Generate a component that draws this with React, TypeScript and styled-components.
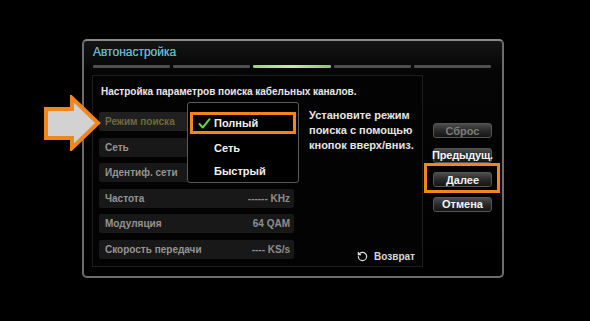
import styled, { createGlobalStyle } from "styled-components";
import { RotateCcw } from "lucide-react";

const GlobalStyle = createGlobalStyle`
  html, body {
    margin: 0;
    padding: 0;
    background: #000;
  }
  body {
    font-family: "Liberation Sans", Arial, sans-serif;
    color: #e6e6e6;
  }
`;

const Stage = styled.div`
  position: relative;
  width: 590px;
  height: 321px;
  padding: 39px 0 0 82px;
  box-sizing: border-box;
  background: #000;
  overflow: hidden;
`;

const Window = styled.div`
  width: 422px;
  height: 239px;
  box-sizing: border-box;
  border: 2px solid #6c6c6c;
  border-top-color: #8a8a8a;
  border-radius: 5px;
  background: linear-gradient(#141414 0px, #050505 30px, #000 100%);
  padding: 0 0 0 8px;
  display: flex;
  flex-direction: column;
`;

const Title = styled.div`
  padding: 3px 0 0 1px;
  height: 17px;
  line-height: 17px;
  font-size: 12px;
  color: #63b6c9;
  text-shadow: 0 0 0.5px #63b6c9;
`;

const Steps = styled.div`
  display: flex;
  gap: 3px;
  margin: 4px 0 0 1px;
  width: 398px;
`;

const Step = styled.div<{ $active?: boolean }>`
  flex: 1;
  height: 3px;
  border-radius: 1px;
  background: ${(p) =>
    p.$active
      ? "linear-gradient(90deg, #9fcf7a 0%, #c8e8a8 50%, #8fbf70 100%)"
      : "#4e4e4e"};
`;

const Body = styled.div`
  display: flex;
  margin-top: 7px;
`;

const Panel = styled.div`
  position: relative;
  width: 331px;
  height: 192px;
  box-sizing: border-box;
  border: 1px solid #1d1d1d;
  background: #030303;
  padding: 9px 6px 0 6px;
  display: flex;
  flex-direction: column;
`;

const Heading = styled.div`
  font-size: 10px;
  line-height: 14px;
  font-weight: bold;
  color: #e8e8e8;
  padding-left: 2px;
`;

const Content = styled.div`
  display: flex;
  gap: 15px;
  margin-top: 13px;
  flex: 1;
`;

const Rows = styled.div`
  display: flex;
  flex-direction: column;
  gap: 6.6px;
  width: 195px;
`;

const Row = styled.div<{ $current?: boolean }>`
  height: 19px;
  border-radius: 2px;
  background: ${(p) => (p.$current ? "#202020" : "#181818")};
  display: flex;
  align-items: center;
  justify-content: space-between;
  padding: 0 4px 0 6px;
  font-size: 10px;
  font-weight: bold;
  color: ${(p) => (p.$current ? "#6f6a3b" : "#949494")};
`;

const Value = styled.span`
  color: #8e8e8e;
`;

const Side = styled.div`
  flex: 1;
  display: flex;
  flex-direction: column;
  justify-content: space-between;
  padding-bottom: 4px;
`;

const Hint = styled.div`
  margin-top: -4px;
  font-size: 11px;
  line-height: 15px;
  font-weight: bold;
  color: #e6e6e6;
`;

const Back = styled.div`
  align-self: flex-end;
  display: flex;
  align-items: center;
  gap: 6px;
  padding-right: 1px;
  font-size: 10px;
  font-weight: bold;
  color: #d8d8d8;
  svg {
    color: #e0e0e0;
  }
`;

const Dropdown = styled.div`
  position: absolute;
  left: 94px;
  top: 26px;
  width: 112px;
  height: 81px;
  box-sizing: border-box;
  border: 1px solid #5a5a5a;
  border-radius: 3px;
  background: #000;
  padding: 9px 2px 0 2px;
  display: flex;
  flex-direction: column;
`;

const Option = styled.div<{ $selected?: boolean }>`
  height: ${(p) => (p.$selected ? "22px" : "23px")};
  box-sizing: border-box;
  margin-bottom: ${(p) => (p.$selected ? "2px" : "0")};
  border: ${(p) => (p.$selected ? "3px solid #f0861c" : "3px solid transparent")};
  display: flex;
  align-items: center;
  padding-left: 4px;
  gap: 3px;
  font-size: 11px;
  font-weight: bold;
  color: #f2f2f2;
`;

const Check = styled.span`
  width: 14px;
  display: inline-flex;
  justify-content: center;
`;

const Buttons = styled.div`
  display: flex;
  flex-direction: column;
  gap: 9.5px;
  margin: 48px 0 0 10px;
  width: 59px;
`;

const Button = styled.div<{ $disabled?: boolean; $marked?: boolean }>`
  position: relative;
  height: 15px;
  box-sizing: border-box;
  border: 1px solid #555;
  border-radius: 3px;
  background: linear-gradient(#4c4c4c, #2a2a2a 50%, #151515);
  display: flex;
  align-items: center;
  justify-content: center;
  white-space: nowrap;
  font-size: 11px;
  font-weight: bold;
  color: ${(p) => (p.$disabled ? "#7c7c7c" : "#f4f4f4")};
  ${(p) =>
    p.$marked &&
    `
    &::after {
      content: "";
      position: absolute;
      left: -10px;
      right: -9px;
      top: -10px;
      bottom: -7px;
      border: 3px solid #f0861c;
    }
  `}
`;

const Wide = styled.span`
  display: inline-block;
  margin: 0 -6px;
  letter-spacing: -0.2px;
`;

const Arrow = styled.svg`
  position: absolute;
  left: 36px;
  top: 95px;
`;

const rows = [
  { label: "Сеть", value: "" },
  { label: "Идентиф. сети", value: "" },
  { label: "Частота", value: "------ KHz" },
  { label: "Модуляция", value: "64 QAM" },
  { label: "Скорость передачи", value: "---- KS/s" },
];

const App = () => {
  return (
    <>
      <GlobalStyle />
      <Stage>
        <Window>
          <Title>Автонастройка</Title>
          <Steps>
            <Step />
            <Step />
            <Step $active />
            <Step />
            <Step />
          </Steps>
          <Body>
            <Panel>
              <Heading>Настройка параметров поиска кабельных каналов.</Heading>
              <Content>
                <Rows>
                  <Row $current>Режим поиска</Row>
                  {rows.map((r) => (
                    <Row key={r.label}>
                      {r.label}
                      <Value>{r.value}</Value>
                    </Row>
                  ))}
                </Rows>
                <Side>
                  <Hint>
                    Установите режим
                    <br />
                    поиска с помощью
                    <br />
                    кнопок вверх/вниз.
                  </Hint>
                  <Back>
                    <RotateCcw size={11} strokeWidth={2.6} />
                    Возврат
                  </Back>
                </Side>
              </Content>
              <Dropdown>
                <Option $selected>
                  <Check>
                    <svg width="13" height="11" viewBox="0 0 13 11">
                      <path
                        d="M1.5 6 L4.8 9.5 L11.5 1.2"
                        fill="none"
                        stroke="#6fd04a"
                        strokeWidth="2"
                        strokeLinecap="round"
                        strokeLinejoin="round"
                      />
                    </svg>
                  </Check>
                  Полный
                </Option>
                <Option>
                  <Check />
                  Сеть
                </Option>
                <Option>
                  <Check />
                  Быстрый
                </Option>
              </Dropdown>
            </Panel>
            <Buttons>
              <Button $disabled>Сброс</Button>
              <Button>
                <Wide>Предыдущ.</Wide>
              </Button>
              <Button $marked>Далее</Button>
              <Button>Отмена</Button>
            </Buttons>
          </Body>
        </Window>
        <Arrow width="66" height="56" viewBox="0 0 66 56">
          <path
            d="M10 14 L36 14 L36 3 L62 28 L36 53 L36 43 L10 43 Z"
            fill="#d2d2d2"
            stroke="#f0861c"
            strokeWidth="4"
            strokeLinejoin="miter"
          />
        </Arrow>
      </Stage>
    </>
  );
};

export default App;
